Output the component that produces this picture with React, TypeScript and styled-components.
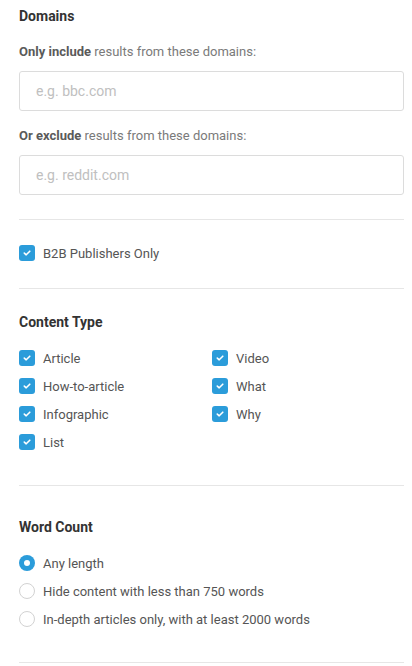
import styled, { createGlobalStyle } from 'styled-components';

const GlobalStyle = createGlobalStyle`
  body {
    margin: 0;
    background: #fff;
    font-family: Roboto, "Liberation Sans", Arial, sans-serif;
    font-size: 13px;
  }
`;

const Panel = styled.div`
  width: 412px;
  padding: 0 8px 0 19px;
  box-sizing: border-box;
`;

const Section = styled.section<{ $top: number; $bottom: number }>`
  padding: ${(p) => p.$top}px 0 ${(p) => p.$bottom}px;
  border-bottom: 1px solid #e6e6e6;
  display: flex;
  flex-direction: column;
`;

const Title = styled.h3`
  margin: 0 0 18px;
  font-size: 14px;
  line-height: 18px;
  font-weight: 700;
  color: #333;
`;

const FieldLabel = styled.div`
  font-size: 13px;
  line-height: 18px;
  color: #7a7a7a;
  margin-bottom: 10px;

  b {
    color: #5a5a5a;
    font-weight: 700;
  }
`;

const Input = styled.input`
  height: 40px;
  box-sizing: border-box;
  border: 1px solid #dcdcdc;
  border-radius: 3px;
  padding: 0 16px;
  font-family: inherit;
  font-size: 14px;
  color: #555;
  outline: none;

  &::placeholder {
    color: #c0c0c0;
  }
`;

const Gap = styled.div<{ $h: number }>`
  height: ${(p) => p.$h}px;
`;

const Grid = styled.div`
  display: grid;
  grid-template-columns: 193px 1fr;
  row-gap: 10px;
`;

const List = styled.div`
  display: flex;
  flex-direction: column;
  gap: 10px;
`;

const Option = styled.label`
  display: flex;
  align-items: center;
  gap: 8px;
  height: 18px;
  font-size: 13px;
  color: #555;
`;

const Box = styled.span`
  width: 16px;
  height: 16px;
  border-radius: 3px;
  background: #2b9cda;
  display: flex;
  align-items: center;
  justify-content: center;
  flex-shrink: 0;
`;

const Radio = styled.span<{ $on?: boolean }>`
  width: 16px;
  height: 16px;
  border-radius: 50%;
  box-sizing: border-box;
  flex-shrink: 0;
  background: ${(p) => (p.$on ? '#2b9cda' : '#fff')};
  border: ${(p) => (p.$on ? 'none' : '1px solid #d2d2d2')};
  display: flex;
  align-items: center;
  justify-content: center;

  &::after {
    content: '';
    display: ${(p) => (p.$on ? 'block' : 'none')};
    width: 6px;
    height: 6px;
    border-radius: 50%;
    background: #fff;
  }
`;

const Check = ({ label }: { label: string }) => (
  <Option>
    <Box>
      <svg width="8" height="6" viewBox="0 0 8 6">
        <path d="M1.3 3.1 L3.2 4.8 L6.8 1.2" fill="none" stroke="#fff" strokeWidth="1.6" strokeLinecap="round" strokeLinejoin="round" />
      </svg>
    </Box>
    {label}
  </Option>
);

const App = () => {
  return (
    <>
      <GlobalStyle />
      <Panel>
        <Section $top={7} $bottom={24}>
          <Title>Domains</Title>
          <FieldLabel>
            <b>Only include</b> results from these domains:
          </FieldLabel>
          <Input placeholder="e.g. bbc.com" />
          <Gap $h={16} />
          <FieldLabel>
            <b>Or exclude</b> results from these domains:
          </FieldLabel>
          <Input placeholder="e.g. reddit.com" />
        </Section>

        <Section $top={24} $bottom={26}>
          <Check label="B2B Publishers Only" />
        </Section>

        <Section $top={24} $bottom={34}>
          <Title>Content Type</Title>
          <Grid>
            <Check label="Article" />
            <Check label="Video" />
            <Check label="How-to-article" />
            <Check label="What" />
            <Check label="Infographic" />
            <Check label="Why" />
            <Check label="List" />
          </Grid>
        </Section>

        <Section $top={32} $bottom={34}>
          <Title>Word Count</Title>
          <List>
            <Option>
              <Radio $on />
              Any length
            </Option>
            <Option>
              <Radio />
              Hide content with less than 750 words
            </Option>
            <Option>
              <Radio />
              In-depth articles only, with at least 2000 words
            </Option>
          </List>
        </Section>
      </Panel>
    </>
  );
};

export default App;
